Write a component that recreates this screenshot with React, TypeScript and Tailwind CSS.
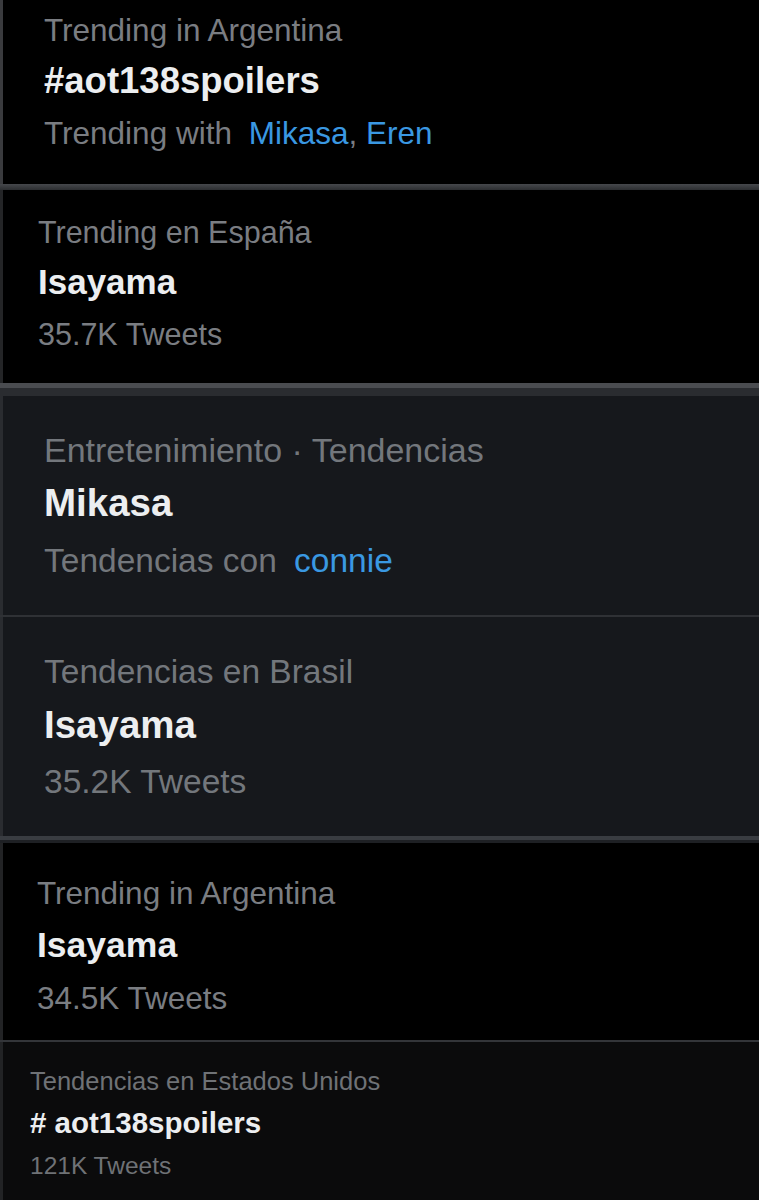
export default function App() {
    return (
        <div className="min-h-[1200px] w-[759px] overflow-hidden bg-black font-['Liberation_Sans',Arial,sans-serif]">

            {/* Argentina / hashtag */}
            <section className="h-[184px] border-l-[3px] border-[#3a3b3e] bg-black pl-[41px] pt-[10px]">
                <p className="text-[31.5px] leading-[40px] text-[#7a7d82]">Trending in Argentina</p>
                <p className="mt-[11px] text-[36.5px] font-bold leading-[40px] text-[#eceef0]">#aot138spoilers</p>
                <p className="mt-[12px] text-[31.5px] leading-[40px] text-[#7a7d82]">
                    Trending with <span className="ml-[8px] text-[#3a98e2]">Mikasa</span>
                    <span className="text-[#7a7d82]">, </span>
                    <span className="text-[#3a98e2]">Eren</span>
                </p>
            </section>
            <div className="h-[6px] bg-gradient-to-b from-[#46484c] to-[#2c2e31]" />

            {/* España */}
            <section className="h-[193px] border-l-[3px] border-[#242527] bg-black pl-[35px] pt-[22px]">
                <p className="text-[30.5px] leading-[40px] text-[#7a7d82]">Trending en España</p>
                <p className="mt-[10px] text-[35px] font-bold leading-[40px] text-[#eceef0]">Isayama</p>
                <p className="mt-[12px] text-[30.5px] leading-[40px] text-[#7a7d82]">35.7K Tweets</p>
            </section>
            <div className="h-[5px] bg-[#4a4c50]" />
            <div className="h-[8px] bg-[#2a2c30]" />

            {/* Entretenimiento */}
            <section className="h-[219px] border-l-[3px] border-[#2a2c30] bg-[#16181c] pl-[41px] pt-[34px]">
                <p className="text-[34px] leading-[40px] text-[#73777c]">Entretenimiento · Tendencias</p>
                <p className="mt-[13px] text-[38.5px] font-bold leading-[40px] text-[#eceef0]">Mikasa</p>
                <p className="mt-[18px] text-[33.5px] leading-[40px] text-[#73777c]">
                    Tendencias con <span className="ml-[8px] text-[#3a98e2]">connie</span>
                </p>
            </section>
            <div className="h-[2px] bg-[#2f3135]" />

            {/* Brasil */}
            <section className="h-[219px] border-l-[3px] border-[#2a2c30] bg-[#16181c] pl-[41px] pt-[35px]">
                <p className="text-[33.5px] leading-[40px] text-[#73777c]">Tendencias en Brasil</p>
                <p className="mt-[13px] text-[38.5px] font-bold leading-[40px] text-[#eceef0]">Isayama</p>
                <p className="mt-[17px] text-[33.5px] leading-[40px] text-[#73777c]">35.2K Tweets</p>
            </section>
            <div className="h-[4px] bg-[#393c41]" />
            <div className="h-[3px] bg-[#1e2024]" />

            {/* Argentina */}
            <section className="h-[197px] border-l-[3px] border-[#222325] bg-black pl-[34px] pt-[30px]">
                <p className="text-[31.5px] leading-[40px] text-[#7a7d82]">Trending in Argentina</p>
                <p className="mt-[12px] text-[35.5px] font-bold leading-[40px] text-[#eceef0]">Isayama</p>
                <p className="mt-[13px] text-[31.5px] leading-[40px] text-[#7a7d82]">34.5K Tweets</p>
            </section>
            <div className="h-[2px] bg-[#333539]" />

            {/* Estados Unidos */}
            <section className="h-[158px] border-l-[3px] border-[#222325] bg-[#0b0b0c] pl-[27px] pt-[23px]">
                <p className="text-[25.5px] leading-[32px] text-[#6f7276]">Tendencias en Estados Unidos</p>
                <p className="mt-[10px] text-[29.5px] font-bold leading-[32px] text-[#eceef0]"># aot138spoilers</p>
                <p className="mt-[11px] text-[24.5px] leading-[32px] text-[#6f7276]">121K Tweets</p>
            </section>

        </div>
    );
}
